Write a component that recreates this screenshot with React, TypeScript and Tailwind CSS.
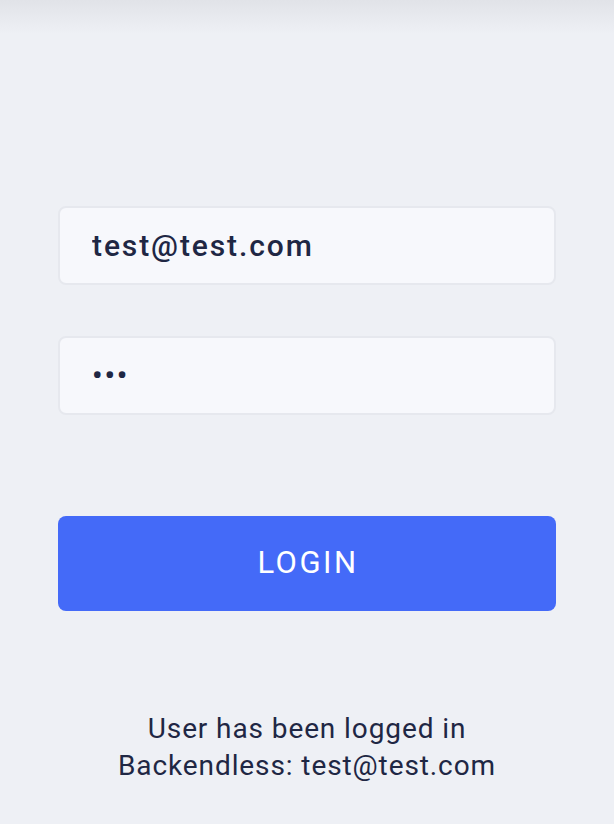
import { useState } from "react"

export default function App() {
	const [email, setEmail] = useState("test@test.com")
	const [password, setPassword] = useState("abc")

	return (
		<div className="min-h-[824px] bg-[#eef0f5] font-['Roboto',sans-serif] text-[#1f2744]">
			<div className="h-[34px] bg-gradient-to-b from-[#e1e3e8] to-[#eef0f5]" />
			<div className="flex flex-col px-[58px] pt-[172px]">
				<input
					type="email"
					value={email}
					onChange={(e) => setEmail(e.target.value)}
					className="h-[79px] w-full rounded-lg border-2 border-[#e6e8ee] bg-[#f7f8fc] px-[32px] text-[30px] font-medium tracking-[1.9px] text-[#1f2744] outline-none"
				/>
				<input
					type="password"
					value={password}
					onChange={(e) => setPassword(e.target.value)}
					className="mt-[51px] h-[79px] w-full rounded-lg border-2 border-[#e6e8ee] bg-[#f7f8fc] px-[32px] text-[30px] font-medium tracking-[1.9px] text-[#1f2744] outline-none"
				/>
				<button
					type="button"
					className="mt-[101px] h-[95px] w-full rounded-lg bg-[#446af8] pl-[2px] text-[31px] font-normal tracking-[2.5px] text-white"
				>
					LOGIN
				</button>
				<div className="mt-[99px] text-center text-[28px] leading-[37px] tracking-[0.9px]">
					<p>User has been logged in</p>
					<p>Backendless: test@test.com</p>
				</div>
			</div>
		</div>
	)
}
